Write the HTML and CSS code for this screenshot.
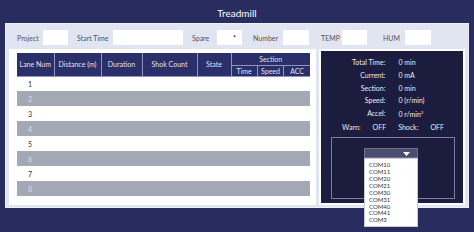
FILE: index.html
```html
<!DOCTYPE html>
<html lang="en">
<head>
    <meta charset="UTF-8">
    <title>Treadmill</title>
    <link rel="stylesheet" href="styles.css">
</head>
<body>
    <h1 class="title">Treadmill</h1>

    <div class="panel">
        <div class="fields">
            <label class="l-project">Project</label><input type="text" class="f-project">
            <label class="l-start">Start Time</label><input type="text" class="f-start">
            <label class="l-spare">Spare</label><input type="text" class="f-spare" value="*">
            <label class="l-number">Number</label><input type="text" class="f-number">
            <label class="l-temp">TEMP</label><input type="text" class="f-temp">
            <label class="l-hum">HUM</label><input type="text" class="f-hum">
        </div>

        <div class="content">
            <div class="card table-card">
                <table class="lanes">
                    <thead>
                        <tr>
                            <th rowspan="2" class="c-lane">Lane Num</th>
                            <th rowspan="2" class="c-dist">Distance (m)</th>
                            <th rowspan="2" class="c-dur">Duration</th>
                            <th rowspan="2" class="c-shok">Shok Count</th>
                            <th rowspan="2" class="c-state">State</th>
                            <th colspan="3" class="section">Section</th>
                        </tr>
                        <tr class="sub">
                            <th class="c-time">Time</th>
                            <th class="c-speed">Speed</th>
                            <th class="c-acc">ACC</th>
                        </tr>
                    </thead>
                    <tbody>
                        <tr><td>1</td><td></td><td></td><td></td><td></td><td></td><td></td><td></td></tr>
                        <tr><td>2</td><td></td><td></td><td></td><td></td><td></td><td></td><td></td></tr>
                        <tr><td>3</td><td></td><td></td><td></td><td></td><td></td><td></td><td></td></tr>
                        <tr><td>4</td><td></td><td></td><td></td><td></td><td></td><td></td><td></td></tr>
                        <tr><td>5</td><td></td><td></td><td></td><td></td><td></td><td></td><td></td></tr>
                        <tr><td>6</td><td></td><td></td><td></td><td></td><td></td><td></td><td></td></tr>
                        <tr><td>7</td><td></td><td></td><td></td><td></td><td></td><td></td><td></td></tr>
                        <tr><td>8</td><td></td><td></td><td></td><td></td><td></td><td></td><td></td></tr>
                    </tbody>
                </table>
            </div>

            <div class="card side-card">
                <div class="status">
                    <div class="stats">
                        <span class="k">Total Time:</span><span class="v">0 min</span>
                        <span class="k">Current:</span><span class="v">0 mA</span>
                        <span class="k">Section:</span><span class="v">0 min</span>
                        <span class="k">Speed:</span><span class="v">0 (r/min)</span>
                        <span class="k">Accel:</span><span class="v">0 r/min<sup>2</sup></span>
                    </div>
                    <div class="flags">
                        <span>Warn:</span><span>OFF</span>
                        <span>Shock:</span><span>OFF</span>
                    </div>
                    <div class="port-box">
                        <div class="select">
                            <svg width="7" height="4" viewBox="0 0 7 4"><path d="M0 0 L7 0 L3.5 4 Z" fill="#fff"/></svg>
                            <ul class="options">
                                <li>COM10</li>
                                <li>COM11</li>
                                <li>COM20</li>
                                <li>COM21</li>
                                <li>COM30</li>
                                <li>COM31</li>
                                <li>COM40</li>
                                <li>COM41</li>
                                <li>COM3</li>
                            </ul>
                        </div>
                    </div>
                </div>
            </div>
        </div>
    </div>
</body>
</html>
```

FILE: styles.css
```css
* {
    margin: 0;
    padding: 0;
    box-sizing: border-box;
}

body {
    font-family: Lato, 'Open Sans', sans-serif;
    background: #282c5e;
    color: #444;
    width: 474px;
    height: 232px;
    overflow: hidden;
    padding: 0 5px;
}

.title {
    font-size: 10px;
    font-weight: normal;
    color: #fff;
    text-align: center;
    height: 23px;
    line-height: 26px;
}

.panel {
    background: #e1e4f1;
    border: 1px solid #eef0f8;
    padding: 0 3px 2px 3px;
    height: 185px;
}

.fields {
    display: flex;
    align-items: center;
    height: 25px;
    padding-top: 2px;
    padding-left: 8px;
    font-size: 7px;
    color: #555;
}

.fields input {
    height: 15px;
    border: none;
    background: #fff;
    font-size: 7px;
    font-family: inherit;
    text-align: right;
    padding-right: 6px;
}

.l-project { width: 26px; }
.l-start { width: 36px; }
.l-spare { width: 25px; }
.l-number { width: 30px; }
.l-temp { width: 21px; }
.l-hum { width: 22px; }

.f-project { width: 25px; margin-right: 9px; }
.f-start { width: 70px; margin-right: 9px; }
.f-spare { width: 25px; margin-right: 11px; }
.f-number { width: 26px; margin-right: 12px; }
.f-temp { width: 25px; margin-right: 16px; }
.f-hum { width: 26px; }

.content {
    display: flex;
    gap: 3px;
    height: 156px;
}

.card {
    background: #fff;
}

.table-card {
    width: 307px;
    padding: 4px 6px 8px 8px;
}

.side-card {
    width: 146px;
    padding: 2px;
}

.lanes {
    width: 293px;
    border-collapse: collapse;
    font-size: 7px;
    table-layout: fixed;
}

.lanes th {
    background: #2b2f69;
    color: #dfe1ef;
    font-weight: normal;
    border: 1px solid #8f93bd;
    border-top: none;
    height: 11px;
}

.lanes thead tr:first-child th {
    height: 12px;
}

.lanes th.c-lane { border-left: none; width: 37px; }
.lanes th.c-dist { width: 47px; }
.lanes th.c-dur { width: 41px; }
.lanes th.c-shok { width: 55px; }
.lanes th.c-state { width: 34px; }
.lanes th.c-acc { border-right: none; }
.lanes th.section { border-right: none; }

.lanes td {
    height: 15px;
    padding: 0;
}

.lanes td:first-child {
    padding-left: 11px;
    color: #333;
}

.lanes tbody tr:nth-child(even) td {
    background: #a4a7b4;
}

.lanes tbody tr:nth-child(even) td:first-child {
    color: #dcdee6;
}

.status {
    background: #1c1d3e;
    height: 100%;
    padding-top: 5px;
    color: #e8e9f2;
    font-size: 7px;
    position: relative;
}

.stats {
    display: grid;
    grid-template-columns: 1fr 1fr;
    column-gap: 13px;
}

.stats span {
    line-height: 12.8px;
}

.stats .k {
    text-align: right;
}

.stats sup {
    font-size: 4px;
}

.flags {
    display: flex;
    justify-content: center;
    gap: 12px;
    line-height: 12.8px;
    padding-left: 2px;
}

.port-box {
    margin: 3px 8px 0 10px;
    border: 1px solid #7a7d9c;
    height: 62px;
    padding-top: 10px;
}

.select {
    position: relative;
    width: 54px;
    height: 10px;
    margin-left: 32px;
    background: #4a4f6f;
    border: 1px solid #6b6f8c;
}

.select svg {
    position: absolute;
    right: 7px;
    top: 3px;
}

.options {
    position: absolute;
    top: 9px;
    left: -1px;
    width: 54px;
    background: #fff;
    border: 1px solid #c9cad4;
    list-style: none;
    padding: 3px 0 2px 4px;
    font-size: 6px;
    color: #333;
}

.options li {
    line-height: 6.9px;
}
```
